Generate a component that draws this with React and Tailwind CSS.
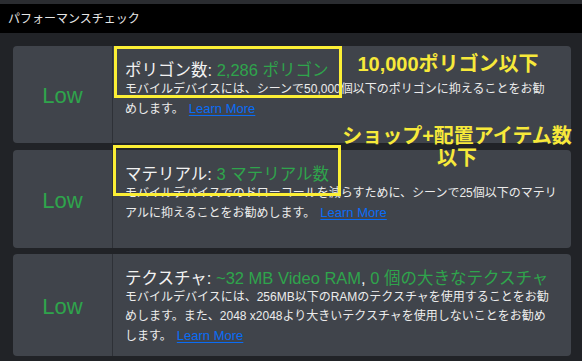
import React from "react";

const font = { fontFamily: '"Liberation Sans", "Noto Sans CJK JP", sans-serif' };

const G = ({ children }) => <span className="text-[#2fa44c]">{children}</span>;

const LearnMore = () => (
  <a href="#" className="ml-[5px] text-[13px] text-[#0a6cf5] underline underline-offset-2">Learn More</a>
);

// ── Check row ─────────────────────────────────────────────────────────────────
const CheckCard = ({ height, title, lines }) => (
  <div className={`flex ${height} bg-[#40444b] rounded-[4px] overflow-hidden`}>
    <div className="w-[100px] shrink-0 flex items-center justify-center border-r border-[#2e3137]">
      <span className="text-[22px] text-[#2fa44c] leading-none pt-[3px]">Low</span>
    </div>
    <div className="flex-1 pl-[12px] pt-[14px]">
      <div className="text-[16.5px] leading-[20px] text-[#f2f2f2] whitespace-nowrap">{title}</div>
      <div className="text-[12px] leading-[19px] text-[#ececec]">
        {lines.map((l, i) => (
          <div key={i} className="whitespace-nowrap">{l}</div>
        ))}
      </div>
    </div>
  </div>
);

export default function App() {
  return (
    <div className="relative w-[582px] h-[361px] bg-[#212327] overflow-hidden" style={font}>
      <div className="h-[4px] bg-[#2a2c30]" />
      <div className="h-[29px] bg-black flex items-center pl-[8px] text-[12px] text-[#e6e6e6]">
        パフォーマンスチェック
      </div>

      <div className="pl-[13px] pr-[11px] pt-[13px] flex flex-col">
        <CheckCard
          height="h-[97px]"
          title={<>ポリゴン数: <G>2,286 ポリゴン</G></>}
          lines={[
            "モバイルデバイスには、シーンで50,000個以下のポリゴンに抑えることをお勧",
            <>めします。<LearnMore /></>,
          ]}
        />
        <div className="h-[7px]" />
        <CheckCard
          height="h-[98px]"
          title={<>マテリアル: <G>3 マテリアル数</G></>}
          lines={[
            "モバイルデバイスでのドローコールを減らすために、シーンで25個以下のマテリ",
            <>アルに抑えることをお勧めします。<LearnMore /></>,
          ]}
        />
        <div className="h-[6px]" />
        <CheckCard
          height="h-[102px]"
          title={<>テクスチャ: <G>~32 MB Video RAM</G>, <G>0 個の大きなテクスチャ</G></>}
          lines={[
            "モバイルデバイスには、256MB以下のRAMのテクスチャを使用することをお勧",
            "めします。また、2048 x2048より大きいテクスチャを使用しないことをお勧め",
            <>します。<LearnMore /></>,
          ]}
        />
      </div>

      {/* annotation overlays */}
      <div className="absolute left-[114px] top-[46px] w-[228px] h-[52px] border-[3px] border-[#fcef35]" />
      <div className="absolute left-[113px] top-[145px] w-[228px] h-[51px] border-[3px] border-[#fcef35]" />
      <div className="absolute left-[340px] top-[52px] w-[216px] text-center text-[20px] leading-[24px] font-bold text-[#f7e93a]">
        10,000ポリゴン以下
      </div>
      <div className="absolute left-[340px] top-[125px] w-[234px] text-center text-[20px] leading-[22px] font-bold text-[#f7e93a]">
        ショップ+配置アイテム数<br />以下
      </div>
    </div>
  );
}
